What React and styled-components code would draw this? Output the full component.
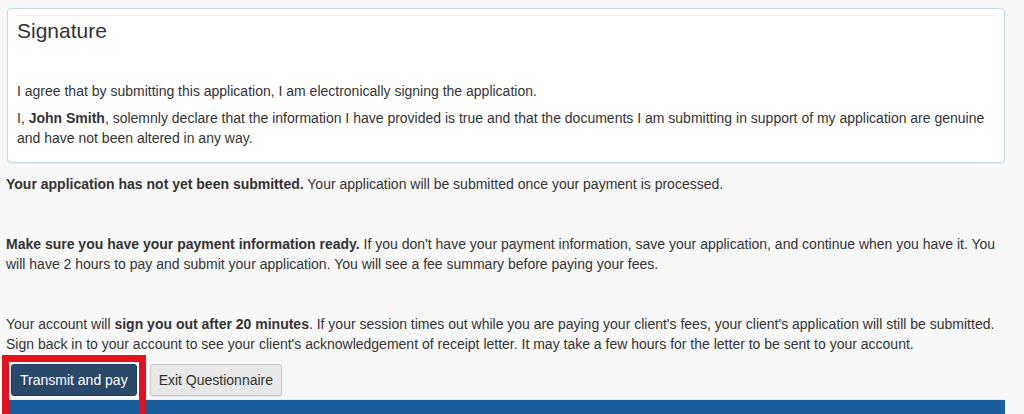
import React from "react";
import styled, { createGlobalStyle } from "styled-components";

const GlobalStyle = createGlobalStyle`
  html, body {
    margin: 0;
    padding: 0;
    background: #f8f8f8;
  }
  body {
    font-family: "Liberation Sans", Arial, sans-serif;
    color: #333;
    overflow: hidden;
  }
`;

const App = () => {
  return (
    <>
      <GlobalStyle />
      <Page>
        <SignaturePanel>
          <PanelBody>
            <PanelTitle>Signature</PanelTitle>
            <Text>
              I agree that by submitting this application, I am electronically signing the application.
            </Text>
            <Text>
              I, <strong>John Smith</strong>, solemnly declare that the information I have provided is true and that the documents I am submitting in support of my application are genuine and have not been altered in any way.
            </Text>
          </PanelBody>
        </SignaturePanel>

        <Notice>
          <strong>Your application has not yet been submitted.</strong> Your application will be submitted once your payment is processed.
        </Notice>

        <Notice>
          <strong>Make sure you have your payment information ready.</strong> If you don't have your payment information, save your application, and continue when you have it. You will have 2 hours to pay and submit your application. You will see a fee summary before paying your fees.
        </Notice>

        <Notice>
          Your account will <strong>sign you out after 20 minutes</strong>. If your session times out while you are paying your client's fees, your client's application will still be submitted. Sign back in to your account to see your client's acknowledgement of receipt letter. It may take a few hours for the letter to be sent to your account.
        </Notice>

        <ButtonRow>
          <Button $primary $highlighted>Transmit and pay</Button>
          <Button>Exit Questionnaire</Button>
        </ButtonRow>

        <FooterBar />
      </Page>
    </>
  );
};

export default App;

const Page = styled.div`
  padding: 8px 19px 0 6px;
  font-size: 14px;
  line-height: 20px;
`;

const SignaturePanel = styled.section`
  margin-left: 1px;
  background: #fff;
  border: 1px solid #c5dbe3;
  border-radius: 4px;
  box-shadow: 0 1px 2px rgba(0, 0, 0, 0.06);
  padding: 6px 9px 7px;
`;

const PanelBody = styled.div`
  border-top: 1px solid #f0f0f0;
`;

const PanelTitle = styled.h2`
  margin: 2px 0 37px;
  font-size: 21px;
  font-weight: 400;
  line-height: 26px;
  color: #333;
`;

const Text = styled.p`
  margin: 0 0 7px;

  strong {
    font-weight: 700;
  }
`;

const Notice = styled.p`
  margin: 11px 0 40px;

  & + & {
    margin-top: 0;
  }

  strong {
    font-weight: 700;
  }
`;

const ButtonRow = styled.div`
  display: flex;
  gap: 13px;
  margin: -30px 0 0 5px;
  position: relative;
  z-index: 1;
`;

const Button = styled.button`
  position: relative;
  height: 32px;
  padding: 0 8px;
  font-family: "Liberation Sans", Arial, sans-serif;
  font-size: 14px;
  border-radius: 3px;
  cursor: pointer;
  color: ${(p) => (p.$primary ? "#fff" : "#333")};
  background: ${(p) => (p.$primary ? "#2a4869" : "#e8e8e8")};
  border: 1px solid ${(p) => (p.$primary ? "#1f3a5a" : "#c8c8c8")};
  box-shadow: ${(p) => (p.$primary ? "0 0 0 1px #fff" : "0 1px 1px rgba(0,0,0,0.08)")};

  ${(p) =>
    p.$highlighted &&
    `
    &::after {
      content: "";
      position: absolute;
      top: -10px;
      left: -10px;
      right: -10px;
      bottom: -30px;
      border: 7px solid #e3121e;
      border-bottom: none;
      pointer-events: none;
    }
  `}
`;

const FooterBar = styled.div`
  margin: 3px 0 0 1px;
  height: 30px;
  background: #1b5e9e;
  border-top: 1px solid #e9eef3;
`;
